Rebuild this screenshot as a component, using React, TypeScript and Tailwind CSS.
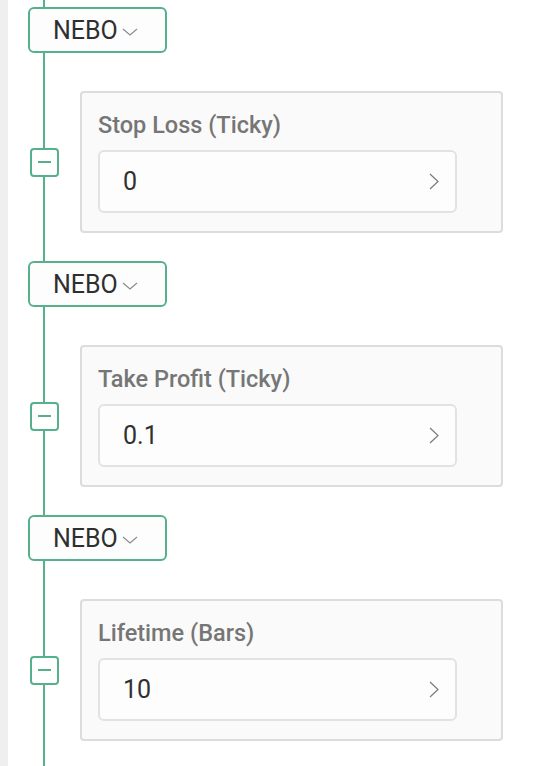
import React from 'react';

type Param = { label: string; value: string };

const params: Param[] = [
  { label: 'Stop Loss (Ticky)', value: '0' },
  { label: 'Take Profit (Ticky)', value: '0.1' },
  { label: 'Lifetime (Bars)', value: '10' },
];

function ChevronDown() {
  return (
    <svg width="16" height="8" viewBox="0 0 16 8" fill="none" className="ml-[4px] mt-[4px]">
      <path d="M1 1 L8 7 L15 1" stroke="#8a8a8a" strokeWidth="1.1" />
    </svg>
  );
}

function ChevronRight() {
  return (
    <svg width="10" height="17" viewBox="0 0 10 17" fill="none">
      <path d="M1 1 L9 8.5 L1 16" stroke="#7a7a7a" strokeWidth="1.2" />
    </svg>
  );
}

function OperatorButton() {
  return (
    <button className="flex h-[46px] w-[139px] items-center rounded-[6px] border-2 border-[#55b08b] bg-[#fdfdfd] pl-[23px] text-[25px] leading-none text-[#2f2f2f]">
      NEBO
      <ChevronDown />
    </button>
  );
}

function ParamRow({ label, value }: Param) {
  return (
    <div className="flex items-center">
      {/* collapse toggle */}
      <div className="ml-[22px] flex h-[29px] w-[29px] shrink-0 items-center justify-center rounded-[4px] border-2 border-[#55b08b] bg-white">
        <div className="h-[2px] w-[13px] bg-[#55b08b]" />
      </div>

      <div className="ml-[21px] h-[142px] w-[423px] rounded-[4px] border-2 border-[#dcdcdc] bg-[#fafafa] pl-[16px] pt-[18px]">
        <div className="text-[23.5px] font-medium leading-[28px] text-[#767676]">{label}</div>
        <div className="mt-[11px] flex h-[63px] w-[359px] items-center justify-between rounded-[6px] border-2 border-[#e2e2e2] bg-[#fdfdfd] pl-[23px] pr-[16px]">
          <span className="text-[25px] leading-none text-[#303030]">{value}</span>
          <ChevronRight />
        </div>
      </div>
    </div>
  );
}

export default function App() {
  return (
    <div className="flex h-[766px] w-full overflow-hidden bg-white" style={{ fontFamily: 'Roboto, "Noto Sans", sans-serif' }}>
      <div className="w-[8px] shrink-0 bg-[#efefef]" />

      <div className="relative flex-1 pt-[7px]">
        {/* timeline */}
        <div className="absolute bottom-0 left-[35px] top-0 w-[2px] bg-[#55b08b]" />

        <div className="relative flex flex-col">
          {params.map((p, i) => (
            <div key={p.label} className={i > 0 ? 'mt-[28px]' : ''}>
              <div className="ml-[20px]">
                <OperatorButton />
              </div>
              <div className="mt-[38px]">
                <ParamRow {...p} />
              </div>
            </div>
          ))}
        </div>
      </div>
    </div>
  );
}
